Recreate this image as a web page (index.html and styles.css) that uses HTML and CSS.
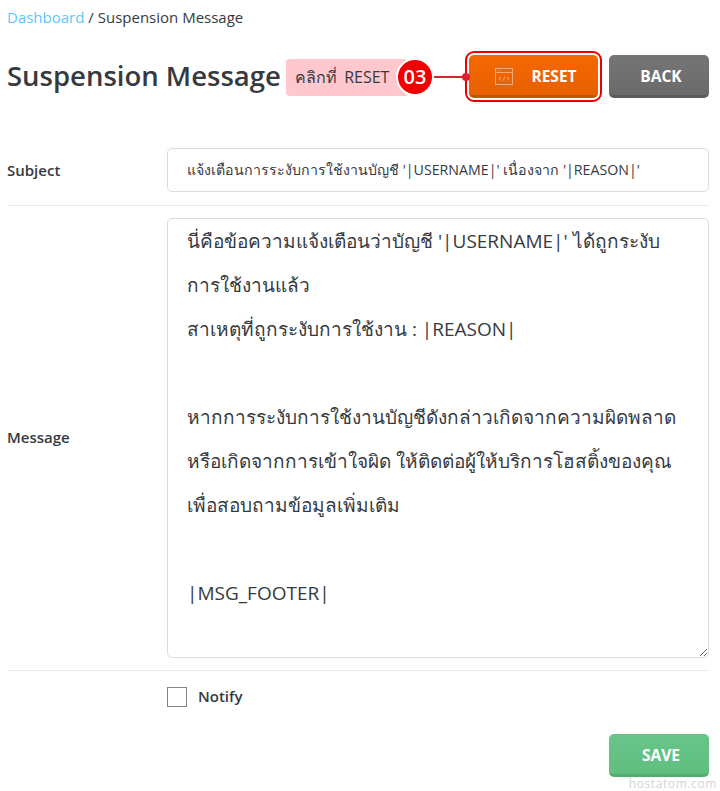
FILE: index.html
```html
<!DOCTYPE html>
<html>
<head>
<meta charset="utf-8">
<title>Suspension Message</title>
<link rel="stylesheet" href="styles.css">
</head>
<body>
<div class="page">
  <div class="crumbs"><a href="#">Dashboard</a> / Suspension Message</div>

  <div class="head">
    <h1>Suspension Message</h1>
    <div class="step">
      <span class="step_label">คลิกที่ RESET</span>
      <span class="step_num">03</span>
      <span class="step_line"></span>
    </div>
    <a class="btn btn_reset" href="#">
      <svg class="btn_icon" width="18" height="18" viewBox="0 0 18 18" fill="none" stroke="#f9b98e" stroke-width="0.8">
        <rect x="0.5" y="0.5" width="17" height="16"/>
        <path d="M0.5 4.5H17.5M2.5 2.5H3.3M4.5 2.5H5.3"/>
        <path d="M6 9L4 10.7L6 12.4M12 9L14 10.7L12 12.4M10 8.5L8 12.9"/>
      </svg>
      RESET
    </a>
    <a class="btn btn_back" href="#">BACK</a>
  </div>

  <div class="row row_subject">
    <label>Subject</label>
    <input class="field subject" type="text" value="แจ้งเตือนการระงับการใช้งานบัญชี '|USERNAME|' เนื่องจาก '|REASON|'">
  </div>

  <div class="row row_message">
    <label>Message</label>
    <textarea class="field message">นี่คือข้อความแจ้งเตือนว่าบัญชี '|USERNAME|' ได้ถูกระงับการใช้งานแล้ว
สาเหตุที่ถูกระงับการใช้งาน : |REASON|

หากการระงับการใช้งานบัญชีดังกล่าวเกิดจากความผิดพลาด
หรือเกิดจากการเข้าใจผิด ให้ติดต่อผู้ให้บริการโฮสติ้งของคุณ
เพื่อสอบถามข้อมูลเพิ่มเติม

|MSG_FOOTER|</textarea>
  </div>

  <div class="notify">
    <span class="check"></span>
    <span class="notify_text">Notify</span>
  </div>

  <div class="actions">
    <a class="btn btn_save" href="#">SAVE</a>
  </div>
</div>
<div class="mark">hostatom.com</div>
</body>
</html>
```

FILE: styles.css
```css
html, body {
    margin: 0;
    padding: 0;
    background: #fff;
}
body {
    font-family: "Open Sans", "Noto Sans", "Noto Sans CJK SC", sans-serif;
    color: #363a3f;
    position: relative;
    height: 791px;
    overflow: hidden;
}
.page {
    padding: 7px 11px 0 7px;
}
.crumbs {
    font-size: 15px;
    line-height: 20px;
    height: 20px;
}
.crumbs a {
    color: #5bc8fb;
    text-decoration: none;
}
.head {
    display: flex;
    align-items: center;
    height: 43px;
    margin-top: 28px;
}
.head h1 {
    margin: -2px 0 0;
    font-size: 27.5px;
    font-weight: 600;
    line-height: 43px;
    width: 279px;
    white-space: nowrap;
}
.step {
    display: flex;
    align-items: center;
    width: 183px;
    margin-top: 1px;
}
.step_label {
    width: 111px;
    height: 37px;
    line-height: 37px;
    padding-left: 9px;
    background: #ffc8ce;
    border-radius: 4px 0 0 4px;
    font-size: 16px;
    white-space: nowrap;
    word-spacing: 3px;
}
.step_num {
    width: 34px;
    height: 34px;
    line-height: 34px;
    margin-left: -10px;
    border: 2px solid #fff;
    border-radius: 50%;
    background: #f00000;
    color: #fff;
    font-size: 20px;
    font-weight: 600;
    text-align: center;
    flex: none;
}
.step_line {
    position: relative;
    width: 33px;
    height: 2px;
    background: #e0202f;
    flex: none;
}
.step_line::after {
    content: "";
    position: absolute;
    right: -3px;
    top: -3px;
    width: 8px;
    height: 8px;
    border-radius: 50%;
    background: #e0202f;
}
.btn {
    display: flex;
    align-items: center;
    justify-content: center;
    box-sizing: border-box;
    height: 43px;
    padding: 1px 0 0 4px;
    border-radius: 5px;
    color: #fff;
    font-size: 15.5px;
    font-weight: 700;
    text-decoration: none;
}
.btn_reset {
    width: 129px;
    padding-left: 5px;
    background: linear-gradient(#f46800, #e86000);
    border-bottom: 3px solid #c75200;
    outline: 2px solid #ee0000;
    outline-offset: 2px;
}
.btn_icon {
    margin: 3px 18px 0 0;
}
.btn_back {
    width: 100px;
    margin-left: 11px;
    background: linear-gradient(#757575, #6b6b6b);
    border-bottom: 3px solid #5c5c5c;
}
.row {
    display: flex;
    align-items: center;
    border-bottom: 1px solid #eaeaea;
}
.row label {
    width: 160px;
    flex: none;
    font-size: 15px;
    font-weight: 600;
}
.row_subject {
    margin-top: 50px;
    padding-bottom: 13px;
}
.row_message {
    padding: 12px 0;
}
.row_message label {
    margin-top: -2px;
}
.field {
    box-sizing: border-box;
    flex: 1;
    min-width: 0;
    border: 1px solid #dcdcdc;
    border-radius: 5px;
    color: #363a3f;
    font-family: "Open Sans", "Noto Sans", "Noto Sans CJK SC", sans-serif;
    background: #fff;
    outline: none;
}
.subject {
    height: 44px;
    padding: 0 19px;
    font-size: 14.2px;
}
.message {
    display: block;
    height: 440px;
    padding: 0 19px;
    font-size: 19px;
    line-height: 44px;
    resize: vertical;
    overflow: hidden;
}
.notify {
    display: flex;
    align-items: center;
    margin: 16px 0 0 160px;
    height: 20px;
}
.check {
    box-sizing: border-box;
    width: 20px;
    height: 20px;
    border: 1px solid #7f8590;
    background: #fff;
}
.notify_text {
    margin: -2px 0 0 11px;
    font-size: 15px;
    font-weight: 600;
}
.actions {
    display: flex;
    justify-content: flex-end;
    margin-top: 27px;
}
.btn_save {
    width: 100px;
    background: linear-gradient(#68c589, #5fbe80);
    border-bottom: 3px solid #50ae70;
}
.mark {
    position: absolute;
    right: 3px;
    top: 776px;
    font-size: 12px;
    line-height: 16px;
    letter-spacing: 0.6px;
    color: #d4d4d4;
}
```
